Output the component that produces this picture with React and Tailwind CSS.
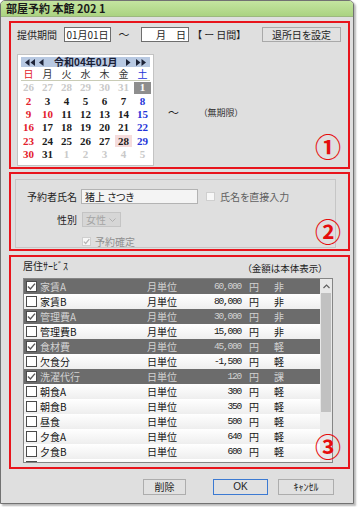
import React from 'react';

const CAL = [
  [[26, 'o'], [27, 'o'], [28, 'o'], [29, 'o'], [30, 'o'], [31, 'o'], [1, 'sel']],
  [[2, 'r'], [3, ''], [4, ''], [5, ''], [6, ''], [7, ''], [8, 'b']],
  [[9, 'r'], [10, 'r'], [11, ''], [12, ''], [13, ''], [14, ''], [15, 'b']],
  [[16, 'r'], [17, ''], [18, ''], [19, ''], [20, ''], [21, ''], [22, 'b']],
  [[23, 'r'], [24, ''], [25, ''], [26, ''], [27, ''], [28, 'today'], [29, 'b']],
  [[30, 'r'], [31, ''], [1, 'o'], [2, 'o'], [3, 'o'], [4, 'o'], [5, 'o']],
];

const ROWS = [
  { name: '家賃A', unit: '月単位', amt: '60,000', tax: '非', sel: true },
  { name: '家賃B', unit: '月単位', amt: '80,000', tax: '非' },
  { name: '管理費A', unit: '月単位', amt: '30,000', tax: '非', sel: true },
  { name: '管理費B', unit: '月単位', amt: '15,000', tax: '非' },
  { name: '食材費', unit: '月単位', amt: '45,000', tax: '軽', sel: true },
  { name: '欠食分', unit: '日単位', amt: '-1,500', tax: '軽' },
  { name: '洗濯代行', unit: '日単位', amt: '120', tax: '課', sel: true },
  { name: '朝食A', unit: '日単位', amt: '300', tax: '軽' },
  { name: '朝食B', unit: '日単位', amt: '350', tax: '軽' },
  { name: '昼食', unit: '日単位', amt: '500', tax: '軽' },
  { name: '夕食A', unit: '日単位', amt: '640', tax: '軽' },
  { name: '夕食B', unit: '日単位', amt: '600', tax: '軽' },
  { name: '夜食', unit: '日単位', amt: '', tax: '軽' },
];

function DateCell({ d, k }) {
  if (k === 'sel') {
    return (
      <div className="h-[13.4px] flex items-center justify-center">
        <span className="w-[17px] h-[12px] bg-[#8e8e8e] text-white flex items-center justify-center">{d}</span>
      </div>
    );
  }
  if (k === 'today') {
    return (
      <div className="h-[13.4px] flex items-center justify-center">
        <span className="w-[17px] h-[12px] bg-[#f5dcdc] text-[#1a1a1a] flex items-center justify-center">{d}</span>
      </div>
    );
  }
  const color =
    k === 'o' ? 'text-[#c9c9c9]' : k === 'r' ? 'text-[#e3202c]' : k === 'b' ? 'text-[#2434d8]' : 'text-[#1a1a1a]';
  return <div className={'h-[13.4px] flex items-center justify-center ' + color}>{d}</div>;
}

function Box({ checked, disabled }) {
  if (disabled) {
    return (
      <span className="w-[9px] h-[9px] shrink-0 bg-[#f7f7f7] border border-[#cfcfcf] flex items-center justify-center">
        {checked && (
          <svg width="7" height="7" viewBox="0 0 7 7">
            <polyline points="0.8,3.6 2.7,5.5 6.3,1.2" fill="none" stroke="#b4b4b4" strokeWidth="1.2" />
          </svg>
        )}
      </span>
    );
  }
  return (
    <span className="w-[11px] h-[11px] shrink-0 bg-white border border-[#4a4a4a] flex items-center justify-center">
      {checked && (
        <svg width="9" height="9" viewBox="0 0 9 9">
          <polyline points="1,4.6 3.4,7 8,1.6" fill="none" stroke="#5a5a5a" strokeWidth="1.4" />
        </svg>
      )}
    </span>
  );
}

function Tri({ dir, double }) {
  const one = dir === 'l' ? '4.5,0 0,3.5 4.5,7' : '0,0 4.5,3.5 0,7';
  const two = dir === 'l' ? '10,0 5.5,3.5 10,7' : '5.5,0 10,3.5 5.5,7';
  return (
    <svg width={double ? 10 : 5} height="7" viewBox={double ? '0 0 10 7' : '0 0 5 7'} className="shrink-0">
      <polygon points={one} fill="#1e2438" />
      {double && <polygon points={two} fill="#1e2438" />}
    </svg>
  );
}

export default function App() {
  return (
    <div className="relative w-[358px] h-[507px] bg-white font-['Noto_Sans_CJK_JP',sans-serif] text-[10px] leading-none text-[#1e1e1e] [font-feature-settings:'palt']">
      <div className="w-[354px] h-[504px] flex flex-col border border-[#727272] rounded-t-[5px] bg-[#dfdfdf] shadow-[2px_2px_2px_rgba(0,0,0,0.28)] overflow-hidden">
        {/* title bar */}
        <div className="h-[16px] shrink-0 flex items-center pl-[5px] bg-gradient-to-b from-[#c4e5a0] to-[#abd381] border-b border-[#9cb87f] font-bold text-[11px] text-[#1a1a1a]">
          部屋予約 本館 202 1
        </div>

        <div className="flex-1 flex flex-col pl-[8px] pt-[4px]">
          {/* Box 1 */}
          <div className="relative w-[341px] h-[148px] shrink-0 border-2 border-[#e8141c] flex flex-col">
            <div className="mt-[4px] h-[15px] flex items-center pl-[6px] pr-[7px]">
              <span className="w-[47px]">提供期間</span>
              <span className="w-[47px] h-[15px] bg-white border border-[#6e6e6e] flex items-center justify-center">01月01日</span>
              <span className="w-[30px] text-center pr-[4px] text-[11px]">～</span>
              <span className="w-[48px] h-[15px] bg-white border border-[#6e6e6e] flex items-center justify-end pr-[2px]">月　日</span>
              <span className="ml-[8px]">【 ー 日間】</span>
              <span className="ml-auto w-[79px] h-[15px] bg-[#e1e1e1] border border-[#a9a9a9] flex items-center justify-center">退所日を設定</span>
            </div>

            <div className="mt-[12px] flex items-center pl-[6px]">
              {/* calendar */}
              <div className="w-[137px] h-[112px] bg-white border border-[#c3c3c3] flex flex-col">
                <div className="mx-[3px] mt-[2px] h-[10px] bg-[#b8c9e2] flex items-center pl-[4px] pr-[4px]">
                  <Tri dir="l" double />
                  <span className="ml-[4px]"><Tri dir="l" /></span>
                  <span className="ml-[10px] font-bold text-[10px] text-[#1a2036]">令和04年01月</span>
                  <span className="ml-auto"><Tri dir="r" /></span>
                  <span className="ml-[5px]"><Tri dir="r" double /></span>
                </div>
                <div className="grid grid-cols-7 px-[1px] h-[13px] items-center text-center text-[10px]">
                  <span className="text-[#e3202c]">日</span>
                  <span className="text-[#333]">月</span>
                  <span className="text-[#333]">火</span>
                  <span className="text-[#333]">水</span>
                  <span className="text-[#333]">木</span>
                  <span className="text-[#333]">金</span>
                  <span className="text-[#2434d8]">土</span>
                </div>
                <div className="mx-[3px] h-[1px] bg-[#c9ccb6]" />
                <div className="grid grid-cols-7 px-[1px] font-['Liberation_Serif',serif] font-bold text-[11px]">
                  {CAL.flat().map(([d, k], i) => (
                    <DateCell key={i} d={d} k={k} />
                  ))}
                </div>
              </div>
              <span className="ml-[14px] mt-[5px] text-[11px]">～</span>
              <span className="ml-[24px] mt-[5px] text-[9px] text-[#333]">（無期限）</span>
            </div>

            <span className="absolute left-[305px] top-[111px] w-[24px] h-[24px] flex items-center justify-center text-[26px] font-bold text-[#e50d0d]">①</span>
          </div>

          {/* Box 2 */}
          <div className="relative mt-[3px] w-[341px] h-[79px] shrink-0 border-2 border-[#e8141c]">
            <div className="ml-[4px] mt-[5px] w-[321px] h-[69px] border border-[#c6c6c6] pt-[9px] flex flex-col">
              <div className="h-[15px] flex items-center">
                <span className="w-[61px] text-right">予約者氏名</span>
                <span className="ml-[4px] w-[117px] h-[15px] bg-[#f4f4f4] border border-[#b3b3b3] flex items-center pl-[3px]">猪上 さつき</span>
                <span className="ml-[8px]"><Box disabled /></span>
                <span className="ml-[5px] text-[#5f5f5f]">氏名を直接入力</span>
              </div>
              <div className="mt-[8px] h-[15px] flex items-center">
                <span className="w-[61px] text-right">性別</span>
                <span className="ml-[5px] w-[39px] h-[15px] bg-[#d6d6d6] border border-[#c4c4c4] flex items-center pl-[3px] text-[#a4a4a4]">
                  女性
                  <svg width="7" height="4" viewBox="0 0 7 4" className="ml-auto mr-[4px]">
                    <polyline points="0.5,0.5 3.5,3.5 6.5,0.5" fill="none" stroke="#b0b0b0" strokeWidth="1" />
                  </svg>
                </span>
              </div>
              <div className="mt-[9px] h-[12px] flex items-center pl-[66px]">
                <Box disabled checked />
                <span className="ml-[4px] text-[#8f8f8f]">予約確定</span>
              </div>
            </div>
            <span className="absolute left-[305px] top-[45px] w-[24px] h-[24px] flex items-center justify-center text-[26px] font-bold text-[#e50d0d]">②</span>
          </div>

          {/* Box 3 */}
          <div className="relative mt-[4px] w-[341px] h-[214px] shrink-0 border-2 border-[#e8141c] flex flex-col">
            <div className="h-[20px] flex items-start pl-[12px] pr-[25px]">
              <span className="mt-[4px]">居住ｻｰﾋﾞｽ</span>
              <span className="ml-auto mt-[7px] text-[9.5px]">（金額は本体表示）</span>
            </div>
            <div className="ml-[12px] mt-[1px] w-[310px] h-[185px] border border-[#858585] bg-white flex overflow-hidden">
              <div className="flex-1 flex flex-col">
                {ROWS.map((r, i) => (
                  <div
                    key={i}
                    className={
                      'h-[15px] shrink-0 flex items-center pl-[2px] ' +
                      (r.sel ? 'bg-[#6c6c6c] text-[#d2d2d2]' : 'bg-gradient-to-b from-white to-[#eeeeee] text-[#151515]')
                    }
                  >
                    <Box checked={r.sel} />
                    <span className="ml-[3px] w-[107px]">{r.name}</span>
                    <span className="w-[40px]">{r.unit}</span>
                    <span className="w-[54px] text-right font-['Liberation_Mono',monospace] text-[9.5px] tracking-[-1.2px]">{r.amt}</span>
                    <span className="ml-[8px] w-[10px]">円</span>
                    <span className="ml-[15px]">{r.tax}</span>
                  </div>
                ))}
              </div>
              <div className="w-[12px] bg-[#e8e8e8] flex flex-col items-center">
                <svg width="7" height="5" viewBox="0 0 7 5" className="mt-[5px]">
                  <polyline points="0.5,4 3.5,1 6.5,4" fill="none" stroke="#606060" strokeWidth="1.2" />
                </svg>
                <div className="mt-[4px] w-[10px] h-[119px] bg-[#c1c1c1]" />
              </div>
            </div>
            <span className="absolute left-[305px] top-[177px] w-[24px] h-[24px] flex items-center justify-center text-[26px] font-bold text-[#e50d0d]">③</span>
          </div>

          {/* bottom buttons */}
          <div className="mt-[10px] flex items-center pl-[134px]">
            <span className="w-[43px] h-[16px] bg-[#e1e1e1] border border-[#adadad] flex items-center justify-center">削除</span>
            <span className="ml-[27px] w-[55px] h-[16px] bg-[#e1e1e1] border border-[#3c7ad2] flex items-center justify-center font-['Liberation_Sans',sans-serif]">OK</span>
            <span className="ml-[10px] w-[56px] h-[16px] bg-[#e1e1e1] border border-[#adadad] flex items-center justify-center">ｷｬﾝｾﾙ</span>
          </div>
        </div>
      </div>
    </div>
  );
}
